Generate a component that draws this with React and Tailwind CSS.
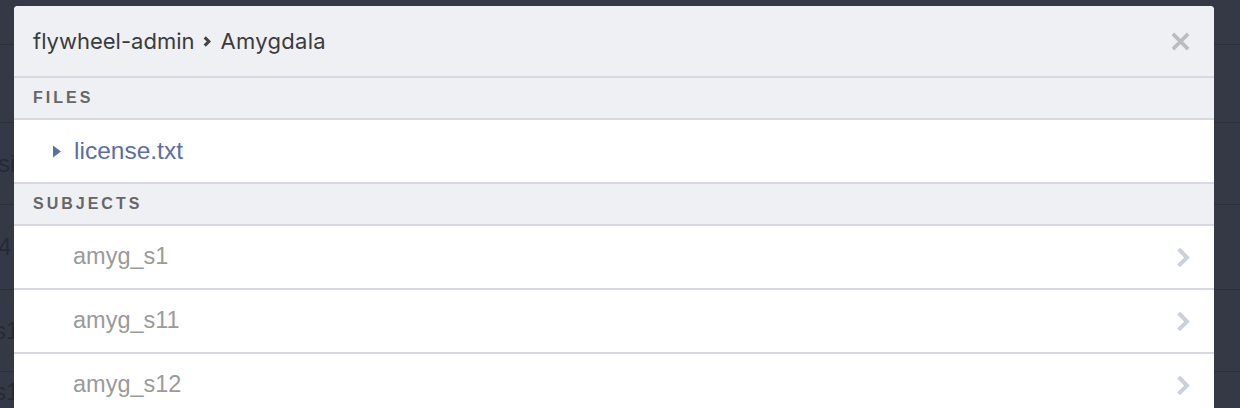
import { useState } from 'react'

const subjects = ['amyg_s1', 'amyg_s11', 'amyg_s12']

function Chevron({ className }) {
  return (
    <svg viewBox="0 0 14 21" className={className} fill="none" stroke="currentColor" strokeWidth="4" strokeLinecap="square">
      <path d="M3 3.5l7 7-7 7" />
    </svg>
  )
}

export default function App() {
  const [open, setOpen] = useState(false)

  return (
    <div className="relative h-[408px] w-full overflow-hidden bg-[#343945] font-['Liberation_Sans',Arial,sans-serif]">
      {/* page behind the modal */}
      <div className="flex flex-col text-[24px] text-[#262a33]">
        <div className="h-[45px] border-b border-[#2c303a]" />
        <div className="h-[78px] border-b border-[#2c303a]" />
        <div className="flex h-[82px] items-center border-b border-[#2c303a]">
          <span className="-ml-[2px]">si</span>
        </div>
        <div className="flex h-[85px] items-center border-b border-[#2c303a]">
          <span className="-ml-[2px]">4</span>
        </div>
        <div className="flex h-[82px] items-center border-b border-[#2c303a]">
          <span className="-ml-[6px]">s1</span>
        </div>
        <div className="flex h-[40px] items-center">
          <span className="-ml-[6px]">s1</span>
        </div>
      </div>

      {/* modal */}
      <div className="absolute left-[14px] top-[6px] w-[1200px] overflow-hidden rounded-t-[4px] bg-white">
        <div className="flex h-[72px] items-center justify-between border-b-2 border-[#d6d9e2] bg-[#eff0f4] pl-[19px] pr-[24px]">
          <div className="flex items-center font-['Inter',sans-serif] text-[22px] text-[#3b3b3b]">
            <span>flywheel-admin</span>
            <svg viewBox="0 0 8 12" className="mx-[9px] h-[11px] w-[8px]" fill="none" stroke="#444" strokeWidth="3.4">
              <path d="M1.5 1.5l4.5 4.5-4.5 4.5" />
            </svg>
            <span className="tracking-[0.3px]">Amygdala</span>
          </div>
          <svg viewBox="0 0 20 20" className="h-[19px] w-[19px]" fill="none" stroke="#bcbcbc" strokeWidth="3.8">
            <path d="M2 2l16 16M18 2L2 18" />
          </svg>
        </div>

        <div className="flex h-[42px] items-center border-b-2 border-[#d6d9e2] bg-[#eff0f4] pl-[19px] text-[16px] font-bold tracking-[3px] text-[#666]">
          FILES
        </div>
        <button
          onClick={() => setOpen(!open)}
          className="flex h-[64px] w-full items-center border-b-2 border-[#d6d9e2] pl-[39px] text-left text-[24.5px] text-[#5a6ea7]"
        >
          <svg viewBox="0 0 8 12" className="mr-[13px] h-[13px] w-[8px]" fill="#5a6ea7">
            <path d="M0 0l8 6-8 6z" />
          </svg>
          license.txt
        </button>

        <div className="flex h-[42px] items-center border-b-2 border-[#d6d9e2] bg-[#eff0f4] pl-[19px] text-[16px] font-bold tracking-[3px] text-[#666]">
          SUBJECTS
        </div>
        {subjects.map((s) => (
          <div key={s} className="flex h-[64px] items-center justify-between border-b-2 border-[#d6d9e2] pl-[59px] pr-[23px] text-[23.5px] text-[#9a9a9a]">
            <span>{s}</span>
            <Chevron className="h-[21px] w-[14px] text-[#cbd0db]" />
          </div>
        ))}
      </div>
    </div>
  )
}
